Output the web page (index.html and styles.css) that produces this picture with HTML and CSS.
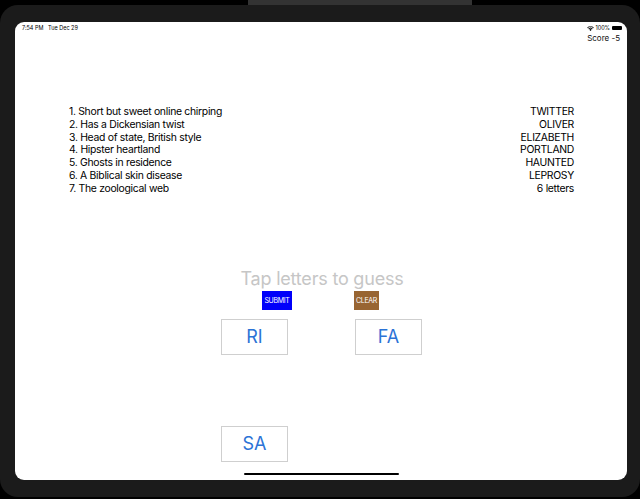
FILE: index.html
```html
<!DOCTYPE html>
<html>
<head>
<meta charset="utf-8">
<link rel="stylesheet" href="styles.css">
</head>
<body>
<div class="notch-row"><div class="notch"></div></div>
<div class="device">
  <div class="screen">
    <div class="status">
      <span class="time">7:54 PM&nbsp;&nbsp;&nbsp;Tue Dec 29</span>
      <span class="sys">
        <svg class="wifi" width="7" height="5" viewBox="0 0 14 10"><path d="M7 10 L4.6 7.4 A3.4 3.4 0 0 1 9.4 7.4 Z M2.6 5.4 A6.2 6.2 0 0 1 11.4 5.4 L10.2 6.6 A4.5 4.5 0 0 0 3.8 6.6 Z M0.4 3.2 A9.4 9.4 0 0 1 13.6 3.2 L12.4 4.4 A7.7 7.7 0 0 0 1.6 4.4 Z" fill="#000"/></svg>
        <span class="pct">100%</span>
        <span class="battery"></span>
      </span>
    </div>
    <div class="score">Score -5</div>
    <div class="clues">
      <ol class="questions">
        <li>1. Short but sweet online chirping</li>
        <li>2. Has a Dickensian twist</li>
        <li>3. Head of state, British style</li>
        <li>4. Hipster heartland</li>
        <li>5. Ghosts in residence</li>
        <li>6. A Biblical skin disease</li>
        <li>7. The zoological web</li>
      </ol>
      <ul class="answers">
        <li>TWITTER</li>
        <li>OLIVER</li>
        <li>ELIZABETH</li>
        <li>PORTLAND</li>
        <li>HAUNTED</li>
        <li>LEPROSY</li>
        <li>6 letters</li>
      </ul>
    </div>
    <div class="guess">Tap letters to guess</div>
    <div class="actions">
      <button class="btn submit">SUBMIT</button>
      <button class="btn clear">CLEAR</button>
    </div>
    <div class="tiles">
      <div class="tile">RI</div>
      <div class="tile">FA</div>
      <div class="tile">SA</div>
    </div>
    <div class="home"></div>
  </div>
</div>
</body>
</html>
```
FILE: styles.css
```css
* { box-sizing: border-box; }
html, body {
  margin: 0;
  padding: 0;
  background: #000;
  width: 640px;
  height: 499px;
  overflow: hidden;
  font-family: Inter, "Liberation Sans", sans-serif;
}
.notch-row {
  height: 5px;
  padding-left: 248px;
}
.notch {
  width: 224px;
  height: 5px;
  background: #333;
}
.device {
  height: 492px;
  background: #1b1b1b;
  border-radius: 18px;
  padding: 17px 13px 17px 15px;
}
.screen {
  position: relative;
  height: 458px;
  background: #fff;
  border-radius: 9px;
  overflow: hidden;
}
.status {
  display: flex;
  justify-content: space-between;
  align-items: center;
  height: 11px;
  padding: 1px 5px 0 7px;
  font-size: 5.5px;
  color: #000;
}
.sys {
  display: flex;
  align-items: center;
  gap: 1px;
}
.pct { margin-right: 1px; }
.battery {
  display: inline-block;
  width: 10px;
  height: 4px;
  border-radius: 1px;
  background: #000;
}
.score {
  text-align: right;
  font-size: 8px;
  padding-right: 7px;
  color: #111;
  height: 10px;
  line-height: 10px;
}
.clues {
  display: flex;
  justify-content: space-between;
  padding: 0 53px 0 54px;
  margin-top: 63px;
  font-size: 10.4px;
  line-height: 12.8px;
  letter-spacing: -0.3px;
  color: #000;
}
.clues ol, .clues ul {
  list-style: none;
  margin: 0;
  padding: 0;
}
.answers { text-align: right; }
.guess {
  margin-top: 72px;
  text-align: center;
  font-size: 18px;
  line-height: 22px;
  letter-spacing: -0.2px;
  color: #c6c6c6;
  padding-left: 2px;
}
.actions {
  display: flex;
  gap: 62px;
  padding-left: 247px;
  margin-top: 1px;
  height: 19px;
}
.btn {
  border: 0;
  margin: 0;
  padding: 0;
  height: 19px;
  color: #fff;
  font-family: Inter, "Liberation Sans", sans-serif;
  font-size: 7px;
  letter-spacing: -0.3px;
}
.submit { width: 30px; background: #0000fa; }
.clear { width: 25px; background: #986532; }
.tiles {
  display: grid;
  grid-template-columns: 67px 67px;
  column-gap: 67px;
  row-gap: 71px;
  padding-left: 206px;
  margin-top: 9px;
}
.tile {
  height: 36px;
  border: 1px solid #cfcfcf;
  display: flex;
  align-items: center;
  justify-content: center;
  color: #2b73d6;
  font-size: 18px;
}
.home {
  position: absolute;
  left: 229px;
  top: 451px;
  width: 155px;
  height: 2px;
  border-radius: 1px;
  background: #000;
}
```
